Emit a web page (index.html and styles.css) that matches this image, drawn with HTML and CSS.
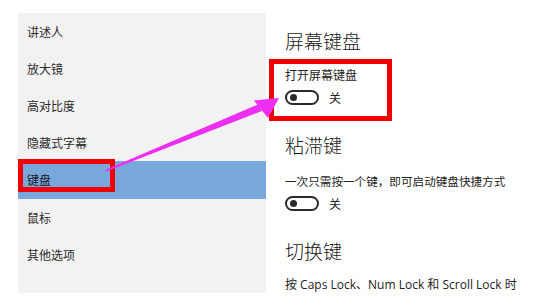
FILE: index.html
```html
<!DOCTYPE html>
<html lang="zh-CN">
<head>
<meta charset="utf-8">
<title>轻松使用 - 键盘</title>
<link rel="stylesheet" href="styles.css">
</head>
<body>
<div class="page">
  <nav class="sidebar">
    <div class="nav-item">讲述人</div>
    <div class="nav-item">放大镜</div>
    <div class="nav-item">高对比度</div>
    <div class="nav-item">隐藏式字幕</div>
    <div class="nav-item active">键盘</div>
    <div class="nav-item">鼠标</div>
    <div class="nav-item">其他选项</div>
  </nav>
  <main class="content">
    <h2 class="title t1">屏幕键盘</h2>
    <div class="label l1">打开屏幕键盘</div>
    <div class="toggle-row r1"><span class="toggle"><span class="knob"></span></span><span class="state">关</span></div>
    <h2 class="title t2">粘滞键</h2>
    <div class="label l2">一次只需按一个键，即可启动键盘快捷方式</div>
    <div class="toggle-row r2"><span class="toggle"><span class="knob"></span></span><span class="state">关</span></div>
    <h2 class="title t3">切换键</h2>
    <div class="label l3">按 Caps Lock、Num Lock 和 Scroll Lock 时</div>
  </main>
</div>
<div class="mark mark-nav"></div>
<div class="mark mark-setting"></div>
<svg class="arrow" width="553" height="306" viewBox="0 0 553 306">
  <polygon points="105.5,171.8 106.3,169.6 258,104.5 262,111" fill="#ee2ef0"/>
  <polygon points="279,98 254,100.5 268,118" fill="#ee2ef0"/>
</svg>
</body>
</html>
```
FILE: styles.css
```css
html, body {
  margin: 0;
  padding: 0;
  background: #ffffff;
}
body {
  width: 553px;
  height: 306px;
  overflow: hidden;
  position: relative;
  font-family: "Noto Sans", "Noto Sans CJK SC", sans-serif;
  color: #1f1f1f;
}
.page {
  display: flex;
  align-items: flex-start;
}
.sidebar {
  margin: 13px 0 0 18px;
  width: 248px;
  height: 280px;
  background: #f2f2f2;
  display: flex;
  flex-direction: column;
}
.nav-item {
  height: 37px;
  line-height: 37px;
  padding-left: 9px;
  font-size: 12px;
  color: #2b2b2b;
  font-family: "Noto Sans CJK SC", sans-serif;
}
.nav-item.active {
  background: #78a8db;
  height: 38px;
  line-height: 38px;
  color: #1a1a1a;
}
.content {
  padding: 29px 0 0 19px;
  font-family: "Noto Sans CJK SC", sans-serif;
}
.title {
  margin: 0;
  font-size: 19px;
  line-height: 24px;
  font-weight: 300;
  color: #1a1a1a;
}
.label {
  font-size: 12px;
  line-height: 16px;
  color: #222;
  white-space: nowrap;
}
.label.l2 {
  font-size: 11.6px;
}
.label.l3 {
  font-family: "Open Sans", "Noto Sans CJK SC", sans-serif;
  font-size: 12px;
}
.l1 { margin-top: 14px; }
.r1 { margin-top: 6px; }
.t2 { margin-top: 28px; }
.l2 { margin-top: 16px; }
.r2 { margin-top: 6px; }
.t3 { margin-top: 28px; }
.l3 { margin-top: 14px; }
.toggle-row {
  display: flex;
  align-items: center;
  height: 16px;
  gap: 10px;
}
.toggle {
  box-sizing: border-box;
  width: 34px;
  height: 15px;
  border: 2px solid #2a2a2a;
  border-radius: 8px;
  display: flex;
  align-items: center;
  padding-left: 3px;
}
.knob {
  width: 7px;
  height: 7px;
  border-radius: 50%;
  background: #2a2a2a;
}
.state {
  font-size: 12px;
  color: #222;
}
.mark {
  position: absolute;
  box-sizing: border-box;
  border: 5px solid #f00000;
}
.mark-nav {
  left: 18px;
  top: 159px;
  width: 97px;
  height: 33px;
}
.mark-setting {
  left: 269px;
  top: 59px;
  width: 123px;
  height: 62px;
}
.arrow {
  position: absolute;
  left: 0;
  top: 0;
  pointer-events: none;
}
```
